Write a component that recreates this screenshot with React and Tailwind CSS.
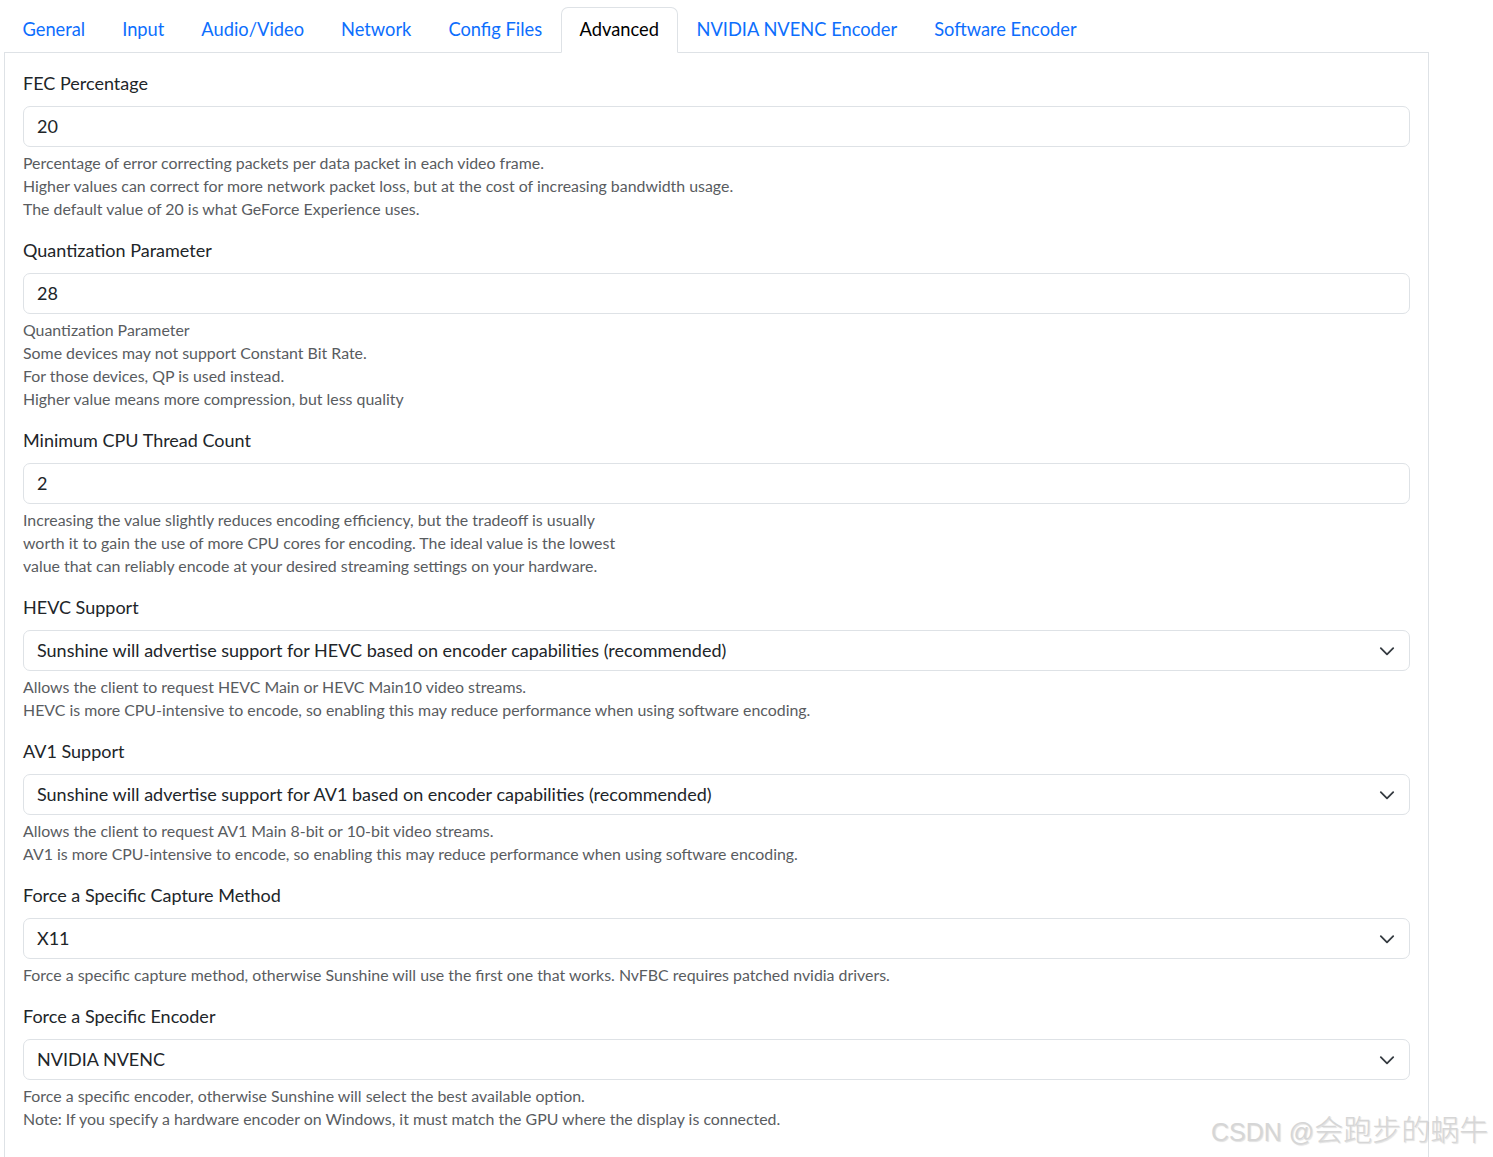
const tabs = [
  'General',
  'Input',
  'Audio/Video',
  'Network',
  'Config Files',
  'Advanced',
  'NVIDIA NVENC Encoder',
  'Software Encoder',
];

const fields = [
  {
    label: 'FEC Percentage',
    type: 'input',
    value: '20',
    help: [
      'Percentage of error correcting packets per data packet in each video frame.',
      'Higher values can correct for more network packet loss, but at the cost of increasing bandwidth usage.',
      'The default value of 20 is what GeForce Experience uses.',
    ],
  },
  {
    label: 'Quantization Parameter',
    type: 'input',
    value: '28',
    help: [
      'Quantization Parameter',
      'Some devices may not support Constant Bit Rate.',
      'For those devices, QP is used instead.',
      'Higher value means more compression, but less quality',
    ],
  },
  {
    label: 'Minimum CPU Thread Count',
    type: 'input',
    value: '2',
    help: [
      'Increasing the value slightly reduces encoding efficiency, but the tradeoff is usually',
      'worth it to gain the use of more CPU cores for encoding. The ideal value is the lowest',
      'value that can reliably encode at your desired streaming settings on your hardware.',
    ],
  },
  {
    label: 'HEVC Support',
    type: 'select',
    value: 'Sunshine will advertise support for HEVC based on encoder capabilities (recommended)',
    help: [
      'Allows the client to request HEVC Main or HEVC Main10 video streams.',
      'HEVC is more CPU-intensive to encode, so enabling this may reduce performance when using software encoding.',
    ],
  },
  {
    label: 'AV1 Support',
    type: 'select',
    value: 'Sunshine will advertise support for AV1 based on encoder capabilities (recommended)',
    help: [
      'Allows the client to request AV1 Main 8-bit or 10-bit video streams.',
      'AV1 is more CPU-intensive to encode, so enabling this may reduce performance when using software encoding.',
    ],
  },
  {
    label: 'Force a Specific Capture Method',
    type: 'select',
    value: 'X11',
    help: [
      'Force a specific capture method, otherwise Sunshine will use the first one that works. NvFBC requires patched nvidia drivers.',
    ],
  },
  {
    label: 'Force a Specific Encoder',
    type: 'select',
    value: 'NVIDIA NVENC',
    help: [
      'Force a specific encoder, otherwise Sunshine will select the best available option.',
      'Note: If you specify a hardware encoder on Windows, it must match the GPU where the display is connected.',
    ],
  },
];

function Chevron() {
  return (
    <svg width="18" height="18" viewBox="0 0 16 16" fill="none" className="shrink-0">
      <path d="m2.5 5.5 5.5 5.5 5.5-5.5" stroke="#343a40" strokeWidth="1.6" strokeLinecap="round" strokeLinejoin="round" />
    </svg>
  );
}

function Field({ field }) {
  return (
    <div className="mb-[17px]">
      <div className="text-[18px] leading-[27px] text-[#212529] mb-[9px]">{field.label}</div>
      <div className="h-[41px] border border-[#dee2e6] rounded-[7px] flex items-center pl-[13px] pr-[13px] text-[18px] text-[#212529]">
        <span className="flex-1">{field.value}</span>
        {field.type === 'select' && <Chevron />}
      </div>
      <div className="mt-1 text-[15.9px] leading-[23px] text-[#595c5f]">
        {field.help.map((line, i) => (
          <div key={i}>{line}</div>
        ))}
      </div>
    </div>
  );
}

export default function App() {
  return (
    <div className="relative min-h-[1157px] bg-white font-['Lato',sans-serif]">
      <div className="w-[1425px] ml-[4px] pt-[7px]">
        <div className="flex border-b border-[#dee2e6]">
          {tabs.map((t) => {
            const active = t === 'Advanced';
            return (
              <div
                key={t}
                className={
                  active
                    ? 'px-[18px] py-[8px] text-[18.3px] leading-[27px] text-[#000] border border-[#dee2e6] border-b-white rounded-t-[7px] -mb-px bg-white'
                    : 'px-[17.5px] py-[8px] text-[18.3px] leading-[27px] text-[#0d6efd] border border-transparent'
                }
              >
                {t}
              </div>
            );
          })}
        </div>
        <div className="border-x border-[#dee2e6] px-[18px] pt-[17px] pb-[17px]">
          {fields.map((f) => (
            <Field key={f.label} field={f} />
          ))}
        </div>
      </div>
      <div className="absolute left-[1211px] top-[1113px] whitespace-nowrap leading-[36px] text-[#d6d6d6] font-['Liberation_Sans','Noto_Sans_CJK_SC',sans-serif] [text-shadow:1px_1px_1px_rgba(0,0,0,0.12)]">
        <span className="text-[25px]">CSDN @</span>
        <span className="text-[29px] font-light">会跑步的蜗牛</span>
      </div>
    </div>
  );
}
